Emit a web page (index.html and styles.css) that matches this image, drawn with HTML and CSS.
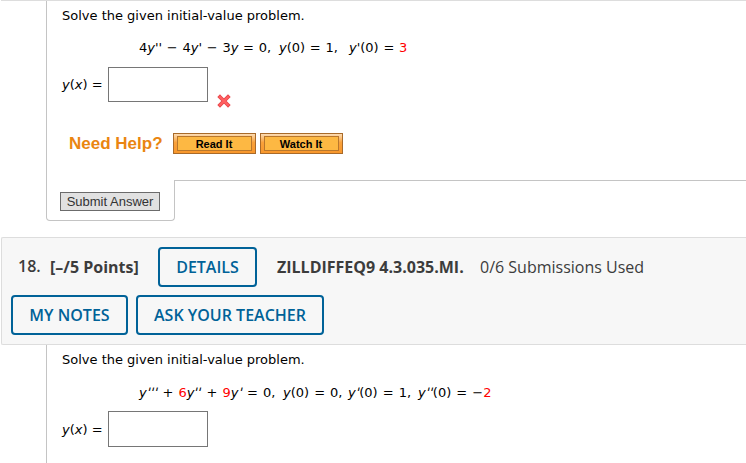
FILE: index.html
```html
<!DOCTYPE html>
<html lang="en">
<head>
  <meta charset="UTF-8">
  <title>Initial-Value Problems</title>
  <meta name="viewport" content="width=device-width, initial-scale=1.0">
  <link rel="stylesheet" href="styles.css">
</head>
<body>
  <div class="question first">
    <div class="content">
      <p class="prompt">Solve the given initial-value problem.</p>
      <p class="equation"><span>4<i>y</i>'' − 4<i>y</i>' − 3<i>y</i> = 0,</span><span><i>y</i>(0) = 1,</span><span><i>y</i>'(0) = <b>3</b></span></p>
      <div class="answer">
        <label for="answer17"><i>y</i>(<i>x</i>) =</label>
        <input type="text" id="answer17">
        <svg class="wrong" width="14" height="14" viewBox="0 0 14 14">
          <path d="M3 3 L11 11 M11 3 L3 11" stroke="#e8444a" stroke-width="3.8" stroke-linecap="square"/>
          <path d="M3 3 L11 11 M11 3 L3 11" stroke="#ff6060" stroke-width="2.2" stroke-linecap="square"/>
        </svg>
      </div>
      <div class="help">
        <span class="help-title">Need Help?</span>
        <button class="help-btn"><span>Read It</span></button>
        <button class="help-btn"><span>Watch It</span></button>
      </div>
    </div>
    <div class="footer">
      <div class="submit-tab"><button class="submit">Submit Answer</button></div>
      <div class="footer-line"></div>
    </div>
  </div>

  <div class="header">
    <div class="header-row">
      <span class="number">18.</span>
      <span class="points">[–/5 Points]</span>
      <button class="btn details">DETAILS</button>
      <span class="code">ZILLDIFFEQ9 4.3.035.MI.</span>
      <span class="used">0/6 Submissions Used</span>
    </div>
    <div class="header-row actions">
      <button class="btn notes">MY NOTES</button>
      <button class="btn ask">ASK YOUR TEACHER</button>
    </div>
  </div>

  <div class="question second">
    <div class="content">
      <p class="prompt">Solve the given initial-value problem.</p>
      <p class="equation"><span><i>y<em>'''</em></i> + <b>6</b><i>y<em>''</em></i> + <b>9</b><i>y<em>'</em></i> = 0,</span><span><i>y</i>(0) = 0,</span><span><i>y<em>'</em></i>(0) = 1,</span><span><i>y<em>''</em></i>(0) = −<b>2</b></span></p>
      <div class="answer">
        <label for="answer18"><i>y</i>(<i>x</i>) =</label>
        <input type="text" id="answer18">
      </div>
    </div>
  </div>
</body>
</html>
```
FILE: styles.css
```css
* {
  box-sizing: border-box;
}
body {
  margin: 0;
  height: 463px;
  overflow: hidden;
  background: #fff;
  color: #000;
  font-family: Verdana, "DejaVu Sans", sans-serif;
  font-size: 13px;
}
button {
  margin: 0;
  padding: 0;
  cursor: pointer;
}

/* question body */
.first {
  height: 237px;
  margin-left: 1px;
  border-top: 1px solid #ddd;
}
.content {
  margin-left: 45px;
  padding-left: 15px;
  border-left: 1px solid #c4c4c4;
}
.first .content {
  height: 179px;
}
.second {
  margin-left: 1px;
}
.second .content {
  height: 118px;
}
.prompt {
  margin: 0;
  padding-top: 6px;
  line-height: 18px;
  white-space: nowrap;
}
.equation {
  display: grid;
  grid-template-columns: 140px 70px auto;
  margin: 14px 0 0 77px;
  line-height: 18px;
  white-space: pre;
  word-spacing: 0.6px;
}
.second .equation {
  grid-template-columns: 144px 65px 70px auto;
  margin-top: 15px;
  word-spacing: 0.9px;
}
.equation b {
  color: #f00;
  font-weight: normal;
}
/* slanted primes */
.equation em {
  display: inline-block;
  transform: skewX(-14deg);
}
.answer {
  display: flex;
  align-items: center;
  height: 35px;
  margin-top: 10px;
}
.second .answer {
  height: 36px;
  margin-top: 9px;
}
.answer label {
  width: 46px;
  white-space: nowrap;
}
.second .answer label {
  padding-top: 1px;
}
.answer input {
  width: 100px;
  height: 100%;
  padding: 0;
  border: 1px solid #767676;
  background: #fff;
}
.wrong {
  align-self: flex-end;
  margin: 0 0 -6px 9px;
}

/* help links */
.help {
  display: flex;
  align-items: center;
  margin: 31px 0 0 7px;
  height: 21px;
  font-family: Arial, "Liberation Sans", sans-serif;
}
.help-title {
  width: 104px;
  color: #ea8511;
  font-size: 17px;
  font-weight: bold;
  white-space: nowrap;
}
.help-btn {
  width: 83px;
  height: 21px;
  margin-right: 4px;
  padding: 2px 3px;
  border: 1px solid #a96a29;
  background: linear-gradient(#fcdcb4, #f9a13a 45%, #f8972c);
}
.help-btn span {
  display: block;
  height: 15px;
  padding-right: 1px;
  border: 1px solid #b9772c;
  background: #fdb843;
  color: #000;
  font: bold 11px/14px Arial, "Liberation Sans", sans-serif;
}

/* submit tab under the question */
.footer {
  display: flex;
  height: 41px;
  margin-left: 45px;
}
.submit-tab {
  width: 129px;
  padding: 12px 0 0 13px;
  border: 1px solid #c4c4c4;
  border-top: 0;
  border-radius: 0 0 4px 4px;
}
.submit {
  width: 100px;
  height: 19px;
  border: 1px solid #6b6b6b;
  background: #e1e1e1;
  color: #333;
  font: 13px/16px Arial, "Liberation Sans", sans-serif;
}
.footer-line {
  flex: 1;
  border-top: 1px solid #c4c4c4;
}

/* question header */
.header {
  height: 108px;
  margin-left: 1px;
  padding: 9px 0 0 9px;
  border: 1px solid #ddd;
  border-right: 0;
  border-radius: 2px 0 0 2px;
  background: #f7f7f7;
  color: #3c3c3c;
  font-family: "Open Sans", sans-serif;
  font-size: 16px;
}
.header-row {
  display: flex;
  align-items: center;
  height: 40px;
  white-space: nowrap;
}
.number {
  width: 32px;
  margin-left: 7px;
  padding-bottom: 2px;
  font-weight: 600;
  font-size: 16px;
}
.points {
  width: 108px;
  font-weight: bold;
}
.code {
  width: 203px;
  margin-left: 20px;
  font-weight: bold;
}
.actions {
  gap: 8px;
  margin-top: 8px;
}
.btn {
  height: 40px;
  border: 2px solid #006298;
  border-radius: 4px;
  background: #f7f7f7;
  color: #006298;
  font: 600 16px "Open Sans", sans-serif;
}
.details {
  width: 99px;
}
.notes {
  width: 117px;
}
.ask {
  width: 188px;
}
```
